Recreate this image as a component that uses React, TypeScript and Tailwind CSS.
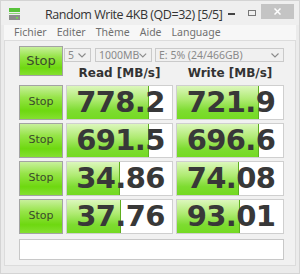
import React from 'react';

const rows = [
  { read: '778.2', readFill: 82, write: '721.9', writeFill: 82 },
  { read: '691.5', readFill: 82, write: '696.6', writeFill: 82 },
  { read: '34.86', readFill: 53, write: '74.08', writeFill: 62 },
  { read: '37.76', readFill: 54, write: '93.01', writeFill: 63 },
];

const menu = ['Fichier', 'Editer', 'Thème', 'Aide', 'Language'];

function StopButton({ big }: { big?: boolean }) {
  return (
    <div
      className={`w-[44px] ${big ? 'h-[30px] text-[13px]' : 'h-[35px] text-[11px]'} flex items-center justify-center border border-[#a3a3a3] bg-[linear-gradient(to_bottom,#c8f09c_0%,#96e448_35%,#6ed810_75%,#84e030_100%)] text-[#3b4a2c] font-['DejaVu_Sans',sans-serif]`}
    >
      Stop
    </div>
  );
}

function Cell({ value, fill, width }: { value: string; fill: number; width: string }) {
  return (
    <div className={`relative ${width} h-[35px] border border-[#cfcfcf] bg-white overflow-hidden`}>
      <div
        className="absolute left-0 top-0 bottom-0 border-r border-[#5fae1f] bg-[linear-gradient(to_bottom,#dcf7bc_0%,#b0eb74_40%,#7ddc30_75%,#74da22_100%)]"
        style={{ width: fill }}
      />
      <div className="relative h-full flex items-center justify-center pl-[2px] text-[29px] leading-none font-bold tracking-[-0.6px] text-[#383838] font-['DejaVu_Sans',sans-serif]">
        {value}
      </div>
    </div>
  );
}

function Select({ label, width }: { label: string; width: string }) {
  return (
    <div className={`${width} h-[14px] flex items-center justify-between border border-[#cacaca] bg-[#f0f0f0] pl-[3px] pr-[4px] text-[10.5px] text-[#8a8a8a] font-['Noto_Sans',sans-serif] whitespace-nowrap`}>
      <span className="leading-none">{label}</span>
      <svg width="8" height="5" viewBox="0 0 8 5">
        <path d="M0.5 0.5 L4 4 L7.5 0.5" fill="none" stroke="#8a8a8a" strokeWidth="1.1" />
      </svg>
    </div>
  );
}

export default function App() {
  return (
    <div className="w-[300px] h-[274px] bg-[#ebebeb] border border-[#d4d4d4] flex flex-col overflow-hidden">
      {/* title bar */}
      <div className="h-[24px] shrink-0 flex items-center bg-[#efefef]">
        <svg className="ml-[8px] mt-[3px]" width="11" height="13" viewBox="0 0 11 13">
          <rect x="0" y="0" width="11" height="4" fill="#58c23a" />
          <rect x="0" y="5" width="11" height="1" fill="#8fd678" />
          <rect x="0" y="7" width="11" height="5" fill="#8c8c8c" />
          <rect x="7" y="9" width="2" height="1.5" fill="#6ee04a" />
        </svg>
        <span className="ml-[25px] mt-[5px] whitespace-nowrap text-[12.5px] text-[#333] font-['Open_Sans',sans-serif] tracking-[-0.45px]">
          Random Write 4KB (QD=32) [5/5]
        </span>
        <div className="ml-auto flex items-start h-full">
          <div className="w-[7px] h-[2px] bg-[#444] mt-[12px] mr-[13px]" />
          <div className="w-[8px] h-[6px] border border-[#777] mt-[9px] mr-[5px]" />
          <div className="w-[33px] h-[15px] mt-[3px] mr-[5px] bg-[#c4c4c4] flex items-center justify-center">
            <svg width="7" height="7" viewBox="0 0 7 7">
              <path d="M0.5 0.5 L6.5 6.5 M6.5 0.5 L0.5 6.5" stroke="#fff" strokeWidth="1.5" />
            </svg>
          </div>
        </div>
      </div>
      {/* menu */}
      <div className="h-[15px] shrink-0 mx-[3px] flex items-center bg-[#f7f7f7] text-[10.5px] text-[#707070] font-['Noto_Sans',sans-serif] whitespace-nowrap">
        {menu.map((m, i) => (
          <span key={m} className={i === 0 ? 'ml-[10px]' : 'ml-[10px]'}>
            {m}
          </span>
        ))}
      </div>
      {/* client */}
      <div className="mx-[3px] h-[226px] shrink-0 bg-[#f1f1f1] border border-[#dcdcdc] pl-[14px] pt-[5px]">
        <div className="flex">
          <StopButton big />
          <div className="ml-[1px] w-[221px]">
            <div className="flex mt-[2px]">
              <Select label="5" width="w-[27px]" />
              <div className="w-[4px]" />
              <Select label="1000MB" width="w-[57px]" />
              <div className="w-[3px]" />
              <Select label="E: 5% (24/466GB)" width="w-[129px]" />
            </div>
            <div className="flex h-[22px] items-center pl-[2px] text-[12px] font-bold text-[#333] font-['DejaVu_Sans',sans-serif] whitespace-nowrap">
              <div className="w-[107px] text-center">Read [MB/s]</div>
              <div className="w-[3px]" />
              <div className="w-[108px] text-center">Write [MB/s]</div>
            </div>
          </div>
        </div>
        <div className="flex flex-col gap-[3px] mt-[1px]">
          {rows.map((r, i) => (
            <div key={i} className="flex gap-[3px]">
              <StopButton />
              <Cell value={r.read} fill={r.readFill} width="w-[107px]" />
              <Cell value={r.write} fill={r.writeFill} width="w-[108px]" />
            </div>
          ))}
        </div>
        <div className="mt-[5px] w-[265px] h-[21px] border border-[#c8c8c8] bg-white" />
      </div>
    </div>
  );
}
